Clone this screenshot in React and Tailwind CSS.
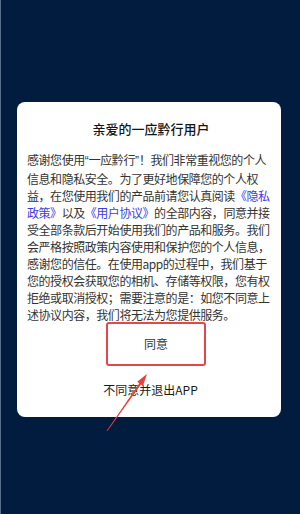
const Q = ({ children }) => (
  <span style={{ fontFamily: '"Liberation Sans", sans-serif' }} className="tracking-normal">
    {children}
  </span>
);

export default function App() {
  const lines = [
    [{ t: "感谢您使用" }, { q: "“" }, { t: "一应黔行" }, { q: "”" }, { t: "！我们非常重视您的个人" }],
    [{ t: "信息和隐私安全。为了更好地保障您的个人权" }],
    [{ t: "益，在您使用我们的产品前请您认真阅读" }, { t: "《隐私", link: true }],
    [{ t: "政策》", link: true }, { t: "以及" }, { t: "《用户协议》", link: true }, { t: "的全部内容，同意并接" }],
    [{ t: "受全部条款后开始使用我们的产品和服务。我们" }],
    [{ t: "会严格按照政策内容使用和保护您的个人信息，" }],
    [{ t: "感谢您的信任。在使用app的过程中，我们基于" }],
    [{ t: "您的授权会获取您的相机、存储等权限，您有权" }],
    [{ t: "拒绝或取消授权；需要注意的是：如您不同意上" }],
    [{ t: "述协议内容，我们将无法为您提供服务。" }],
  ];
  return (
    <div
      className="relative w-[300px] h-[514px] overflow-hidden bg-[#011c3e] border-l border-[#5a6f8c] pt-[102px]"
      style={{ fontFamily: '"Noto Sans CJK SC", "Noto Sans", sans-serif' }}
    >
      <div className="ml-[16px] w-[264px] h-[315px] rounded-[8px] bg-white flex flex-col">
        <div className="pt-[18px] pl-[4px] text-center text-[13px] leading-[18px] font-medium text-[#151515]">
          亲爱的一应黔行用户
        </div>
        <div className="mt-[13px] h-[171px] pl-[10px] text-[12px] tracking-[-0.45px] leading-[17px] text-[#333333]">
          {lines.map((line, i) => (
            <div key={i} className="whitespace-nowrap">
              {line.map((s, j) =>
                s.q ? (
                  <Q key={j}>{s.q}</Q>
                ) : (
                  <span key={j} className={s.link ? "text-[#3d3de6]" : ""}>
                    {s.t}
                  </span>
                )
              )}
            </div>
          ))}
        </div>
        <div className="ml-[89px] w-[100px] h-[44px] border-2 border-[#e4474b] rounded-[3px] flex items-center justify-center text-[12px] text-[#333333]">
          同意
        </div>
        <div className="mt-[15px] pl-[3px] text-center text-[12px] leading-[18px] text-[#1a1a1a]">
          不同意并退出APP
        </div>
      </div>
      <svg
        className="absolute left-0 top-0 pointer-events-none"
        width="300"
        height="514"
        viewBox="0 0 300 514"
      >
        <polygon
          points="105.7,430.8 138.3,383.2 136.2,381.8 146,374 142,385.8 139.9,384.4 106.3,431.2"
          fill="#e8403f"
        />
      </svg>
    </div>
  );
}
